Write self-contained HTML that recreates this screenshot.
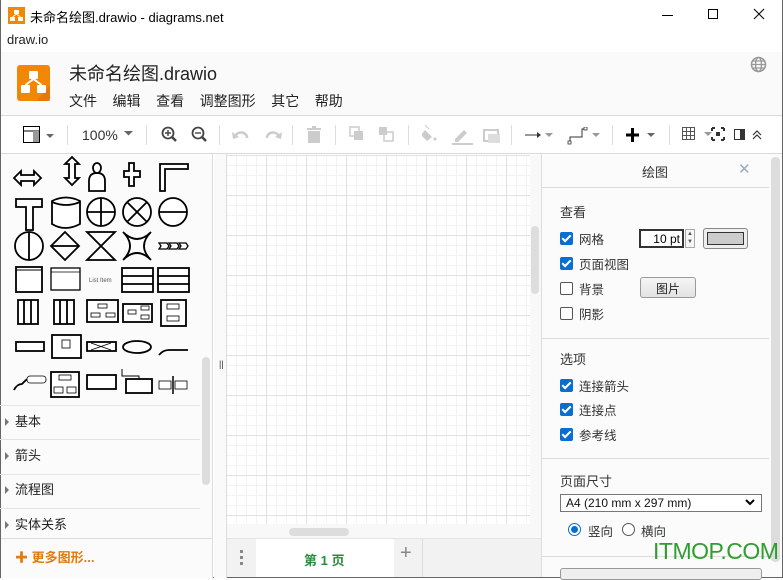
<!DOCTYPE html>
<html><head><meta charset="utf-8"><style>
*{margin:0;padding:0;box-sizing:border-box}
body{width:783px;height:578px;overflow:hidden;background:#fff;font-family:"Liberation Sans","Noto Sans CJK SC",sans-serif;position:relative;color:#000}
.a{position:absolute}
.t{font-size:13px;color:#333}
.sep{position:absolute;top:125px;width:1px;height:20px;background:#ddd}
.cb{position:absolute;width:13px;height:13px;border-radius:2px;background:#0a6ed1;left:560px}
.cb::after{content:"";position:absolute;left:4px;top:1px;width:3px;height:7px;border:solid #fff;border-width:0 2px 2px 0;transform:rotate(45deg)}
.cu{position:absolute;width:13px;height:13px;border-radius:2px;border:1px solid #555;background:#fff;left:560px}
.lbl{position:absolute;left:579px;font-size:12.5px;color:#333}
.si{position:absolute;left:0;width:200px;height:35px;border-bottom:1px solid #e3e3e3}
.si span{position:absolute;left:15px;top:5px;font-size:13px;color:#222}
.si i{position:absolute;left:5px;top:12px;border:4px solid transparent;border-left:4px solid #777;border-right:0}
</style></head><body>
<div class="a" style="left:0;top:0;width:1px;height:578px;background:#666"></div>
<div class="a" style="right:0;top:0;width:1px;height:578px;background:#666"></div>
<div class="a" style="left:0;bottom:0;width:783px;height:1px;background:#666"></div>
<svg class="a" style="left:8px;top:7px" width="17" height="17"><rect width="17" height="17" fill="#f08705"/><rect x="6" y="3" width="5" height="4" fill="#fff"/><rect x="2" y="10" width="5" height="4" fill="#fff"/><rect x="10" y="10" width="5" height="4" fill="#fff"/><path d="M8.5 7L4.5 10M8.5 7L12.5 10" stroke="#fff"/></svg>
<div class="a" style="left:30px;top:7px;font-size:13px">未命名绘图.drawio - diagrams.net</div>
<div class="a" style="left:662px;top:15px;width:11px;height:1px;background:#000"></div>
<div class="a" style="left:708px;top:9px;width:10px;height:10px;border:1px solid #000"></div>
<svg class="a" style="left:753px;top:8px" width="12" height="12"><path d="M1 1L11 11M11 1L1 11" stroke="#000"/></svg>
<div class="a" style="left:7px;top:32px;font-size:13px;color:#222">draw.io</div>
<div class="a" style="left:1px;top:52px;width:781px;height:64px;background:#fafafa;border-bottom:1px solid #dadada"></div>
<svg class="a" style="left:17px;top:65px" width="33" height="36"><rect width="33" height="36" rx="3" fill="#f08705"/><path d="M33 20L20 36H33Z" fill="#df6c0c" opacity=".6"/><rect x="12" y="6" width="9" height="8" rx="1" fill="#fff"/><rect x="4" y="20" width="9" height="8" rx="1" fill="#fff"/><rect x="20" y="20" width="9" height="8" rx="1" fill="#fff"/><path d="M16.5 14L8.5 20M16.5 14L24.5 20" stroke="#fff" stroke-width="2"/></svg>
<div class="a" style="left:69px;top:60px;font-size:18px;color:#222">未命名绘图.drawio</div>
<div class="a" style="left:69px;top:91px;font-size:14px;color:#222">文件&nbsp;&nbsp;&nbsp;&nbsp;编辑&nbsp;&nbsp;&nbsp;&nbsp;查看&nbsp;&nbsp;&nbsp;&nbsp;调整图形&nbsp;&nbsp;&nbsp;&nbsp;其它&nbsp;&nbsp;&nbsp;&nbsp;帮助</div>
<svg class="a" style="left:750px;top:56px" width="17" height="17"><circle cx="8.5" cy="8.5" r="7" fill="none" stroke="#999" stroke-width="1.6"/><ellipse cx="8.5" cy="8.5" rx="3" ry="7" fill="none" stroke="#999" stroke-width="1.4"/><path d="M1.5 8.5H15.5M3 5H14M3 12H14" stroke="#999" stroke-width="1.2"/></svg>
<div class="a" style="left:1px;top:117px;width:781px;height:37px;background:#fff;border-bottom:1px solid #dadada"></div>
<svg class="a" style="left:23px;top:126px" width="34" height="18"><rect x=".5" y=".5" width="16" height="16" fill="none" stroke="#000"/><path d="M.5 5H16.5" stroke="#000"/><rect x="10" y="5" width="6" height="11" fill="#999"/><path d="M23 8h8l-4 4z" fill="#666"/></svg>
<div class="sep" style="left:67px"></div>
<div class="a" style="left:82px;top:127px;font-size:14px;color:#333">100%</div>
<svg class="a" style="left:124px;top:131px" width="10" height="6"><path d="M0 0h9l-4.5 4.5z" fill="#666"/></svg>
<div class="sep" style="left:146px"></div>
<svg class="a" style="left:160px;top:126px" width="50" height="18"><circle cx="8" cy="7" r="5.5" fill="none" stroke="#444" stroke-width="1.8"/><path d="M12 11l4 4" stroke="#444" stroke-width="2.5"/><path d="M5 7h6M8 4v6" stroke="#444" stroke-width="1.4"/><circle cx="38" cy="7" r="5.5" fill="none" stroke="#444" stroke-width="1.8"/><path d="M42 11l4 4" stroke="#444" stroke-width="2.5"/><path d="M35 7h6" stroke="#444" stroke-width="1.4"/></svg>
<div class="sep" style="left:219px"></div>
<svg class="a" style="left:232px;top:128px" width="50" height="14"><path d="M3 9a6 5 0 0 1 12 1" fill="none" stroke="#ccc" stroke-width="2.5"/><path d="M0 4l1 7 6-2z" fill="#ccc"/><path d="M47 9a6 5 0 0 0 -12 1" fill="none" stroke="#ccc" stroke-width="2.5"/><path d="M50 4l-1 7-6-2z" fill="#ccc"/></svg>
<div class="sep" style="left:292px"></div>
<svg class="a" style="left:306px;top:126px" width="16" height="18"><rect x="2" y="5" width="12" height="12" fill="#ccc"/><rect x="1" y="2" width="14" height="2" fill="#ccc"/><rect x="6" y="0" width="4" height="2" fill="#ccc"/></svg>
<div class="sep" style="left:335px"></div>
<svg class="a" style="left:349px;top:126px" width="50" height="18"><rect x="1" y="1" width="9" height="9" fill="none" stroke="#ccc" stroke-width="1.5"/><rect x="5" y="5" width="9" height="9" fill="#ccc"/><rect x="30" y="1" width="8" height="8" fill="#ccc"/><rect x="35" y="6" width="9" height="9" fill="none" stroke="#ccc" stroke-width="1.5"/></svg>
<div class="sep" style="left:408px"></div>
<svg class="a" style="left:422px;top:125px" width="80" height="20"><path d="M3 5l7 7-5 4-6-6z" fill="#ccc"/><path d="M3 0l4 4" stroke="#ccc"/><circle cx="13" cy="14" r="1.5" fill="#ccc"/><path d="M33 14l9-9 3 3-9 9h-3z" fill="#ccc"/><rect x="30" y="18" width="21" height="2" fill="#ccc"/><rect x="62" y="5" width="14" height="11" fill="none" stroke="#ccc" stroke-width="2"/><rect x="66" y="9" width="12" height="9" fill="#ddd"/></svg>
<div class="sep" style="left:511px"></div>
<svg class="a" style="left:525px;top:127px" width="80" height="18"><path d="M0 8h13" stroke="#333"/><path d="M12 5l4 3-4 3z" fill="#333"/><path d="M20 6h8l-4 4z" fill="#999"/><path d="M45 16v-6h12v-8h5" fill="none" stroke="#333"/><rect x="43" y="14" width="3" height="3" fill="#fff" stroke="#333" stroke-width=".8"/><rect x="59" y="0" width="3" height="3" fill="#fff" stroke="#333" stroke-width=".8"/><path d="M67 6h8l-4 4z" fill="#999"/></svg>
<div class="sep" style="left:612px"></div>
<svg class="a" style="left:625px;top:126px" width="34" height="18"><path d="M1 9h13M7.5 2v14" stroke="#000" stroke-width="3"/><path d="M22 7h8l-4 4z" fill="#666"/></svg>
<div class="sep" style="left:669px"></div>
<svg class="a" style="left:682px;top:127px" width="90" height="16"><path d="M.5 .5h12v12h-12zM4.5 .5v12M8.5 .5v12M.5 4.5h12M.5 8.5h12" fill="none" stroke="#555"/><path d="M22 5h8l-4 4z" fill="#999"/><path d="M30 1h3M30 1v3M42 1h-3M42 1v3M30 13h3M30 13v-3M42 13h-3M42 13v-3" stroke="#333" stroke-width="2"/><rect x="34" y="5" width="4" height="4" fill="#333"/><rect x="52.5" y="2.5" width="10" height="10" fill="none" stroke="#333"/><rect x="58" y="3" width="4" height="9" fill="#333"/><path d="M71 8l4-4 4 4M71 12l4-4 4 4" fill="none" stroke="#333" stroke-width="1.2"/></svg>
<div class="a" style="left:1px;top:154px;width:212px;height:424px;background:#fbfbfb;border-right:1px solid #ddd"></div>
<svg class="a" style="left:12px;top:154px" width="180" height="245" fill="#fff" stroke="#000" stroke-width="1.8">
<path d="M2 24l7-7v4h13v-4l7 7-7 7v-4H9v4z"/><path d="M53 10l7-7 7 7h-4v14h4l-7 7-7-7h4V10z"/><path d="M77 37v-10q0-8 8-8 8 0 8 8v10z"/><path d="M81 14a4 5 0 1 1 8 0a4 5 0 1 1 -8 0" /><path d="M120 14h5v-8h5v8h6v6h-6v9h-5v-9h-5z" transform="translate(-8 3)"/><path d="M148 37V10h28v5h-23v22z"/><path d="M4 45h26v8h-9v23h-7V53H4z"/><path d="M40 47v23q13 8 28 0V47q-14-7-28 0z"/><path d="M40 48q14 6 28 0"/><circle cx="89" cy="58" r="14"/><path d="M75 58h28M89 44v28"/><circle cx="125" cy="58" r="14"/><path d="M115 48l20 20M135 48l-20 20"/><circle cx="161" cy="58" r="14"/><path d="M147 58h28"/><circle cx="17" cy="92" r="14"/><path d="M17 78v28"/><path d="M53 78l14 14-14 14-14-14z"/><path d="M39 92h28"/><path d="M75 78h28l-28 28h28z"/><path d="M111 78q14 14 28 0q-14 14 0 28q-14-14-28 0q14-14 0-28z"/><path d="M147 89h8l2 3-2 3h-8l2-3zM157 89h8l2 3-2 3h-8l2-3zM167 89h7l2 3-2 3h-7l2-3z" stroke-width="1.3"/>
<rect x="4" y="113" width="26" height="25"/><path d="M4 116h26" stroke-width="1"/><rect x="39" y="114" width="29" height="22" stroke-width="1.3"/><path d="M39 118h29" stroke-width=".8"/>
<text x="77" y="128" font-size="6" fill="#555" stroke="none" font-family="Liberation Sans">List Item</text>
<rect x="110" y="114" width="31" height="24"/><path d="M110 122h31M110 130h31"/><rect x="146" y="114" width="31" height="24"/><path d="M146 122h31M146 130h31"/>
<rect x="6" y="146" width="20" height="24"/><path d="M12 146v24M19 146v24"/><rect x="42" y="146" width="20" height="24"/><path d="M48 146v24M55 146v24"/>
<rect x="75" y="146" width="31" height="22"/><rect x="86" y="150" width="9" height="4" stroke-width=".8"/><rect x="79" y="159" width="9" height="4" stroke-width=".8"/><rect x="94" y="159" width="9" height="4" stroke-width=".8"/>
<rect x="111" y="150" width="29" height="18"/><rect x="116" y="156" width="8" height="4" stroke-width=".8"/><rect x="129" y="152" width="8" height="4" stroke-width=".8"/><rect x="129" y="161" width="8" height="4" stroke-width=".8"/>
<rect x="149" y="146" width="25" height="26"/><rect x="155" y="150" width="12" height="5" stroke-width=".8"/><rect x="155" y="162" width="12" height="5" stroke-width=".8"/>
<rect x="4" y="188" width="28" height="9"/><rect x="40" y="181" width="29" height="23"/><rect x="50" y="186" width="8" height="8" stroke-width=".8"/><rect x="75" y="188" width="29" height="9"/><path d="M79 189l20 7M79 196l20-7" stroke-width=".8"/><ellipse cx="125" cy="193" rx="14" ry="6"/><path d="M147 201q4-5 10-5h19" fill="none"/>
<path d="M2 236q3-6 8-6l5-5" fill="none"/><rect x="15" y="222" width="19" height="7" rx="3" stroke-width=".8"/><rect x="39" y="218" width="28" height="25"/><rect x="47" y="221" width="12" height="5" stroke-width=".8"/><rect x="42" y="233" width="9" height="6" stroke-width=".8"/><rect x="55" y="233" width="9" height="6" stroke-width=".8"/><rect x="75" y="221" width="29" height="14"/><path d="M110 215v7h17v17h-14" fill="none" stroke-width="1"/><rect x="114" y="225" width="26" height="14"/><rect x="147" y="227" width="12" height="8" stroke-width=".8"/><rect x="163" y="227" width="12" height="8" stroke-width=".8"/><path d="M161 222v18" stroke-width="1.5"/>
</svg>
<div class="a" style="left:202px;top:357px;width:8px;height:128px;background:#ddd;border-radius:4px"></div>
<div class="si" style="top:405px;border-top:1px solid #e3e3e3"><i></i><span>基本</span></div>
<div class="si" style="top:440px"><i></i><span>箭头</span></div>
<div class="si" style="top:474px"><i></i><span>流程图</span></div>
<div class="si" style="top:509px;border-bottom:0"><i></i><span>实体关系</span></div>
<div class="a" style="left:1px;top:538px;width:212px;height:1px;background:#ddd"></div>
<div class="a" style="left:15px;top:547px;font-size:13px;font-weight:bold;color:#e07c10">✚ 更多图形...</div>
<div class="a" style="left:214px;top:154px;width:13px;height:424px;background:#fafafa;border-right:1px solid #ddd"></div>
<div class="a" style="left:219px;top:359px;font-size:9px;color:#333">||</div>
<div class="a" style="left:227px;top:155px;width:303px;height:369px;background-color:#fff;background-image:linear-gradient(#e2e2e2 1px,transparent 1px),linear-gradient(90deg,#e2e2e2 1px,transparent 1px),linear-gradient(#f3f3f3 1px,transparent 1px),linear-gradient(90deg,#f3f3f3 1px,transparent 1px);background-size:40px 40px,40px 40px,10px 10px,10px 10px;background-position:-1px 0,-1px 0,-1px 0,-1px 0"></div>
<div class="a" style="left:530px;top:155px;width:11px;height:383px;background:#f8f8f8"></div>
<div class="a" style="left:531px;top:226px;width:8px;height:68px;background:#ddd;border-radius:4px"></div>
<div class="a" style="left:227px;top:524px;width:303px;height:14px;background:#f8f8f8"></div>
<div class="a" style="left:289px;top:528px;width:60px;height:8px;background:#ddd;border-radius:4px"></div>
<div class="a" style="left:227px;top:538px;width:314px;height:39px;background:#f2f2f2;border-top:1px solid #e4e4e4"></div>
<div class="a" style="left:240px;top:550px;width:3px;height:3px;background:#888;box-shadow:0 6px #888,0 12px #888"></div>
<div class="a" style="left:256px;top:539px;width:138px;height:38px;background:#fff"></div>
<div class="a" style="left:304px;top:550px;font-size:13px;font-weight:bold;color:#2a8a3e">第 1 页</div>
<div class="a" style="left:400px;top:542px;font-size:20px;color:#888">+</div>
<div class="a" style="left:422px;top:539px;width:1px;height:38px;background:#ddd"></div>
<div class="a" style="left:541px;top:154px;width:241px;height:423px;background:#fbfbfb;border-left:1px solid #ddd"></div>
<div class="a" style="left:771px;top:157px;width:9px;height:405px;background:#ddd;border-radius:4px"></div>
<div class="a" style="left:642px;top:162px;font-size:13px;color:#333">绘图</div>
<div class="a" style="left:738px;top:160px;font-size:15px;color:#9ab">✕</div>
<div class="a" style="left:542px;top:187px;width:227px;height:1px;background:#ddd"></div>
<div class="a t" style="left:560px;top:202px">查看</div>
<div class="cb" style="top:232px"></div><div class="lbl" style="top:229px">网格</div>
<div class="a" style="left:639px;top:229px;width:45px;height:19px;border:2px solid #333;background:#fff;font-size:12px;text-align:right;padding:1px 2px 0 0">10 pt</div>
<div class="a" style="left:685px;top:229px;width:10px;height:19px;border:1px solid #aaa;background:#f6f6f6;font-size:6px;line-height:8px;text-align:center;color:#555">▲<br>▼</div>
<div class="a" style="left:703px;top:228px;width:45px;height:21px;border:1px solid #888;border-radius:3px;background:#eee;padding:3px"><div style="width:100%;height:100%;background:#ccc;border:1px solid #333"></div></div>
<div class="cb" style="top:257px"></div><div class="lbl" style="top:254px">页面视图</div>
<div class="cu" style="top:282px"></div><div class="lbl" style="top:279px">背景</div>
<div class="a" style="left:640px;top:277px;width:56px;height:21px;border:1px solid #999;border-radius:3px;background:linear-gradient(#f6f6f6,#e3e3e3);font-size:12px;text-align:center;padding-top:2px;color:#222">图片</div>
<div class="cu" style="top:307px"></div><div class="lbl" style="top:304px">阴影</div>
<div class="a" style="left:542px;top:338px;width:227px;height:1px;background:#ddd"></div>
<div class="a t" style="left:560px;top:349px">选项</div>
<div class="cb" style="top:379px"></div><div class="lbl" style="top:376px">连接箭头</div>
<div class="cb" style="top:403px"></div><div class="lbl" style="top:400px">连接点</div>
<div class="cb" style="top:428px"></div><div class="lbl" style="top:425px">参考线</div>
<div class="a" style="left:542px;top:458px;width:227px;height:1px;background:#ddd"></div>
<div class="a t" style="left:560px;top:471px">页面尺寸</div>
<div class="a" style="left:560px;top:494px;width:202px;height:18px;border:1px solid #777;background:#fff;font-size:12px;padding:1px 0 0 5px;color:#111">A4 (210 mm x 297 mm)</div>
<svg class="a" style="left:745px;top:499px" width="10" height="8"><path d="M1 1l4 4 4-4" fill="none" stroke="#000" stroke-width="2"/></svg>
<div class="a" style="left:568px;top:523px;width:13px;height:13px;border-radius:50%;border:1px solid #0a6ed1;background:#fff"><div style="margin:2px;width:7px;height:7px;border-radius:50%;background:#0a6ed1"></div></div>
<div class="a" style="left:588px;top:521px;font-size:12.5px;color:#333">竖向</div>
<div class="a" style="left:622px;top:523px;width:13px;height:13px;border-radius:50%;border:1px solid #555;background:#fff"></div>
<div class="a" style="left:641px;top:521px;font-size:12.5px;color:#333">横向</div>
<div class="a" style="left:542px;top:556px;width:227px;height:1px;background:#ddd"></div>
<div class="a" style="left:560px;top:568px;width:202px;height:12px;border:1px solid #999;border-radius:3px;background:#eee"></div>
<div class="a" style="left:653px;top:538px;font-size:23px;color:#2f9e2f;letter-spacing:-.5px">ITMOP.COM</div>
</body></html>
